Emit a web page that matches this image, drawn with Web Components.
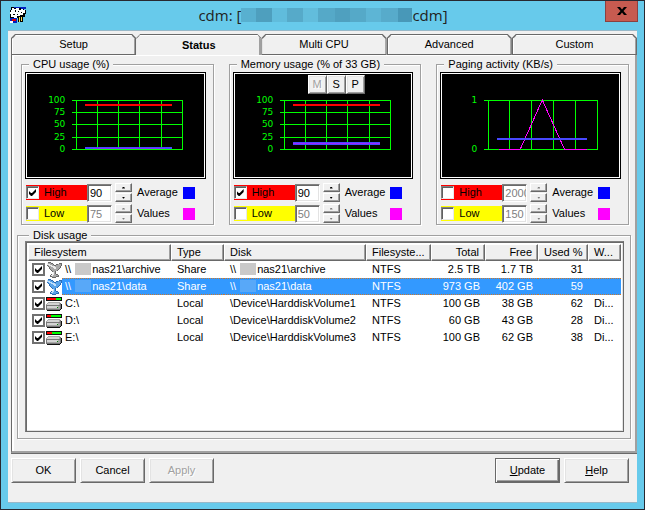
<!DOCTYPE html>
<html lang="en">
<head>
<meta charset="utf-8">
<title>cdm</title>
<style>
html, body { margin: 0; }
body { font: 11px/15px "Liberation Sans", Arial, sans-serif; color: #000; }
</style>
</head>
<body>
<cdm-window></cdm-window>
<script>
const define = (name, html, init) => {
  const template = document.createElement('template');
  template.innerHTML = html;
  customElements.define(name, class extends HTMLElement {
    connectedCallback() {
      if (this.shadowRoot) return;
      this.attachShadow({ mode: 'open' }).append(template.content.cloneNode(true));
      if (init) init.call(this, this.shadowRoot);
    }
  });
};

const checkCss = `
input[type=checkbox] { appearance: none; box-sizing: border-box; width: 13px; height: 13px; margin: 0; flex: none; background: #fff;
  border: 1px solid; border-color: #808080 #e8e8e8 #e8e8e8 #808080; box-shadow: inset 1px 1px #606060; }
input[type=checkbox]:checked::before { content: ""; display: block; width: 7px; height: 7px; margin: 2px; background: #000;
  clip-path: polygon(0 2px, 2px 4px, 3px 4px, 7px 0, 7px 3px, 3px 7px, 2px 7px, 0 5px); }`;

define('win-button', `
<style>
:host { display: block; width: 65px; height: 25px; }
button { box-sizing: border-box; width: 100%; height: 100%; padding: 0; font: inherit; color: #000; background: #f0f0f0;
  border: 1px solid; border-color: #fff #696969 #696969 #fff; box-shadow: inset 1px 1px #e3e3e3, inset -1px -1px #a0a0a0; }
button:disabled { color: #a0a0a0; text-shadow: 1px 1px #fff; }
:host([default]) button { border-color: #696969; box-shadow: inset 1px 1px #fff, inset -1px -1px #696969, inset -2px -2px #a0a0a0; }
</style>
<button type="button"><slot></slot></button>`, function (root) {
  root.querySelector('button').disabled = this.hasAttribute('disabled');
});

define('tab-bar', `
<style>
:host { display: block; }
div { display: grid; grid-template-columns: repeat(5, 1fr); height: 21px; }
button { border: 0; padding: 1px; font: inherit; color: #000; background: #696969; min-width: 0; display: flex;
  clip-path: polygon(0 4px, 4px 0, calc(100% - 4px) 0, 100% 4px, 100% 100%, 0 100%); }
span { flex: 1; height: 100%; display: flex; align-items: center; justify-content: center; background: #f0f0f0;
  clip-path: polygon(0 4px, 4px 0, calc(100% - 4px) 0, 100% 4px, 100% 100%, 0 100%); box-shadow: inset 1px 1px #fff, inset -1px 0 #a0a0a0; }
button[aria-selected=true] { font-weight: bold; padding: 1px 0 0 0; }
button[aria-selected=true] span { box-shadow: inset 1px 1px #fff, inset -2px 0 #a0a0a0; }
</style>
<div role="tablist">
<button role="tab" aria-selected="false"><span>Setup</span></button>
<button role="tab" aria-selected="true"><span>Status</span></button>
<button role="tab" aria-selected="false"><span>Multi CPU</span></button>
<button role="tab" aria-selected="false"><span>Advanced</span></button>
<button role="tab" aria-selected="false"><span>Custom</span></button>
</div>`);

define('group-box', `
<style>
:host { display: flex; flex-direction: column; min-width: 0; }
.box { flex: 1; display: flex; flex-direction: column; margin-top: 6px; padding: var(--pad, 0 7px 2px 3px);
  border: 1px solid #a0a0a0; box-shadow: 1px 1px #fff, inset 1px 1px #fff; }
.caption { width: fit-content; line-height: 13px; margin: -7px 0 var(--caption-gap, 0) 4px; padding: 0 4px; background: #f0f0f0; }
</style>
<div class="box" role="group" aria-labelledby="caption"><div class="caption" id="caption"></div><slot></slot></div>`, function (root) {
  root.querySelector('.caption').textContent = this.getAttribute('caption');
});

define('usage-chart', `
<style>
:host { display: block; position: relative; background: #000; border: 1px solid #000; box-shadow: inset 0 0 0 1px #fff; padding: 1px; }
svg { display: block; width: 100%; height: 103px; font: 9px "DejaVu Sans", sans-serif; fill: #0f0; }
slot { position: absolute; left: 74px; top: 2px; display: flex; }
</style>
<svg viewBox="0 0 176 103" shape-rendering="crispEdges"></svg><slot></slot>`, function (root) {
  const kind = this.getAttribute('kind');
  const paging = kind === 'paging';
  const xs = paging ? [46, 67, 89, 111, 133, 155] : [49, 70, 91, 112, 134, 155];
  const ys = paging ? [26, 75] : [26, 38, 50, 63, 75];
  const labels = paging ? ['1', '0'] : ['100', '75', '50', '25', '0'];
  const start = xs[0] - 4;
  const rect = (x, y, w, h, c) => `<rect x="${x}" y="${y}" width="${w}" height="${h}" fill="${c}"/>`;
  let s = xs.map(x => rect(x, 26, 1, 50, '#0f0')).join('');
  s += ys.map((y, i) => rect(start, y, 156 - start, 1, '#0f0') +
    `<text x="${start - 7}" y="${y + 3}" text-anchor="end">${labels[i]}</text>`).join('');
  if (paging) {
    s += '<path d="M78 75L100 26L122 75" fill="none" stroke="#f0f"/>';
    s += rect(57, 75, 21, 1, '#f0f') + rect(122, 75, 23, 1, '#f0f') + rect(55, 64, 90, 2, '#4848ff');
  } else {
    s += rect(58, 30, 87, 2, '#f00');
    s += kind === 'cpu' ? rect(58, 73, 87, 2, '#4848ff') + rect(66, 74, 72, 1, '#8030ff')
      : rect(58, 68, 87, 3, '#4848ff') + rect(58, 69, 87, 1, '#a020ff');
  }
  root.querySelector('svg').innerHTML = s;
});

define('limit-row', `
<style>
:host { display: grid; grid-template-columns: 61px 26px 19px 1fr 12px; height: 18px; align-items: center; padding: 0 11px 0 1px; }
label { display: flex; align-items: center; height: 15px; background: var(--level); }
.name { margin-left: 5px; }
${checkCss}
input[type=text] { box-sizing: border-box; width: 25px; height: 18px; margin: 0; padding: 0 0 0 2px; font: inherit; border: 1px solid;
  border-color: #808080 #fff #fff #808080; box-shadow: inset 1px 1px #696969, inset -1px -1px #e3e3e3; background: #fff; color: #000; }
input[type=text]:disabled { color: #808080; }
.spin { display: grid; gap: 1px; margin-left: 2px; }
.spin button { box-sizing: border-box; padding: 0; height: 9px; border: 1px solid; border-color: #fff #696969 #696969 #fff; background: #f0f0f0;
  box-shadow: inset -1px -1px #a0a0a0; display: grid; place-items: center; }
i { width: 3px; height: 2px; background: #000; clip-path: polygon(1px 0, 2px 0, 3px 2px, 0 2px); }
.down i { clip-path: polygon(0 0, 3px 0, 2px 2px, 1px 2px); }
button:disabled i { background: #808080; }
.key { padding-left: 5px; }
b { height: 12px; background: var(--mark); }
</style>
<label><input type="checkbox"><span class="name"></span></label>
<input type="text">
<span class="spin"><button type="button" aria-label="Increase"><i></i></button><button type="button" class="down" aria-label="Decrease"><i></i></button></span>
<span class="key"></span><b></b>`, function (root) {
  const high = this.getAttribute('level') === 'High';
  const off = this.hasAttribute('off');
  this.style.setProperty('--level', high ? '#f00' : '#ff0');
  this.style.setProperty('--mark', high ? '#00f' : '#f0f');
  root.querySelector('.name').textContent = high ? 'High' : 'Low';
  root.querySelector('.key').textContent = high ? 'Average' : 'Values';
  root.querySelector('[type=checkbox]').checked = !off;
  const text = root.querySelector('[type=text]');
  text.value = this.getAttribute('value');
  text.disabled = off;
  text.setAttribute('aria-label', high ? 'High limit' : 'Low limit');
  root.querySelectorAll('button').forEach(b => b.disabled = off);
});

define('usage-panel', `
<style>
:host { display: flex; flex-direction: column; min-width: 0; --caption-gap: 1px; }
group-box { flex: 1; }
.rows { display: grid; gap: 3px; padding-top: 4px; }
</style>`, function (root) {
  const get = name => this.getAttribute(name);
  root.querySelector('style').insertAdjacentHTML('afterend', `
<group-box caption="${get('caption')}">
<usage-chart kind="${get('kind')}"><slot></slot></usage-chart>
<div class="rows">
<limit-row level="High" value="${get('high')}" ${this.hasAttribute('off') ? 'off' : ''}></limit-row>
<limit-row level="Low" value="${get('low')}" off></limit-row>
</div>
</group-box>`);
});

const shareMap = [
  '..ddd...........',
  '.lmmmdd......ddd',
  '.lllmmmd..ddmmmd',
  '.dmlllmmddmmmmmd',
  '..dmmllllmmmmmd.',
  '...dmmmlllmmmmd.',
  '...dmmmmllmmmd..',
  '....dmmmmmmmd...',
  '.....dmmmmmd....',
  '......dmmd......',
  '.......lmd......',
  '.......lmd......',
  '.....dllmmdd....',
  '....dllmmmmmd...',
  '....ddmmmmddd...',
  '......dddd......'];
const driveMap = [
  '................',
  'kkkkkkkkkkkkkkkk',
  'kggggggggggggggk',
  'kggggggggggggggk',
  'kkkkkkkkkkkkkkkk',
  '................',
  '..mmmmmmmmmmmm..',
  '.mlllllllllllmd.',
  'mllllllllllllmdk',
  'dddddddddddddddk',
  'dlllllllllllmmdk',
  'dllllllllllGmmdk',
  'dmmmmmmmmmmmmmdk',
  'ddddddddddddddk.',
  '.kkkkkkkkkkkkk..',
  '................'];

define('disk-icon', `
<style>:host { display: block; width: 16px; height: 16px; flex: none; } svg { display: block; }</style>
<svg width="16" height="16" shape-rendering="crispEdges"></svg>`, function (root) {
  const used = +this.getAttribute('used');
  const share = this.hasAttribute('share');
  const colors = this.hasAttribute('selected')
    ? { d: '#2c6cb4', m: '#5aa4ea', l: '#c4e0fa' }
    : { d: share ? '#686868' : '#787878', m: '#a8a8a8', l: share ? '#ececec' : '#d4d4d4', k: '#101010', g: '#0f0', G: '#008000' };
  const map = share ? shareMap : driveMap;
  root.querySelector('svg').innerHTML = Object.entries(colors).map(([key, color]) =>
    `<path fill="${color}" d="${map.flatMap((row, y) => [...row].map((c, x) => c === key ? `M${x} ${y}h1v1h-1z` : '')).join('')}"/>`).join('')
    + (share ? '' : `<path fill="#f00" d="M1 2h${used}v2h-${used}z"/>`);
});

define('disk-table', `
<style>
:host { display: block; flex: 1; box-sizing: border-box; background: #fff; border: 1px solid; border-color: #808080 #696969 #696969 #808080;
  box-shadow: inset 1px 1px #696969, inset -1px -1px #e3e3e3; padding: 2px; overflow: hidden; }
table { width: 100%; table-layout: fixed; border-collapse: separate; border-spacing: 0; }
th { box-sizing: border-box; height: 17px; padding: 0 5px; font-weight: normal; text-align: left; background: #f0f0f0; white-space: nowrap;
  border: 1px solid; border-color: #fff #696969 #696969 #fff; box-shadow: inset -1px -1px #a0a0a0; line-height: 15px; }
td { height: 17px; padding: 0 0 0 6px; line-height: 17px; white-space: nowrap; overflow: hidden; }
th.n, td.n { text-align: right; padding-right: 5px; }
td:first-child { padding: 0 0 0 4px; }
.cell { display: flex; align-items: center; height: 17px; }
${checkCss}
.cell input[type=checkbox] { border: 2px solid #707070; box-shadow: none; }
.cell input[type=checkbox]:checked::before { margin: 1px; }
disk-icon { margin-left: 1px; }
.name { flex: 1; padding-left: 3px; box-sizing: border-box; height: 17px; line-height: 17px; }
.hid { display: inline-block; width: 16px; height: 12px; margin: 0 1px 0 4px; vertical-align: -2px; background: #c9c9c9; }
.sel { color: #fff; }
.sel td:not(:first-child), .sel .name { background: repeating-linear-gradient(90deg, #c87830 0 1px, #3399ff 1px 2px) top / 100% 1px no-repeat,
  repeating-linear-gradient(90deg, #c87830 0 1px, #3399ff 1px 2px) bottom / 100% 1px no-repeat, #3399ff; }
.sel .hid { background: #58a8f8; }
</style>
<table>
<colgroup><col style="width:143px"><col style="width:53px"><col><col style="width:65px"><col style="width:54px"><col style="width:53px"><col style="width:50px"><col style="width:33px"></colgroup>
<thead><tr><th>Filesystem</th><th>Type</th><th>Disk</th><th>Filesyste...</th><th class="n">Total</th><th class="n">Free</th><th class="n">Used %</th><th>W...</th></tr></thead>
<tbody></tbody></table>`, function (root) {
  const hid = '\\\\<span class="hid"></span>';
  const rows = [
    [hid + 'nas21\\archive', 'Share', hid + 'nas21\\archive', '2.5 TB', '1.7 TB', 31, ''],
    [hid + 'nas21\\data', 'Share', hid + 'nas21\\data', '973 GB', '402 GB', 59, ''],
    ['C:\\', 'Local', '\\Device\\HarddiskVolume1', '100 GB', '38 GB', 62, 'Di...'],
    ['D:\\', 'Local', '\\Device\\HarddiskVolume2', '60 GB', '43 GB', 28, 'Di...'],
    ['E:\\', 'Local', '\\Device\\HarddiskVolume3', '100 GB', '62 GB', 38, 'Di...']
  ];
  root.querySelector('tbody').innerHTML = rows.map((r, i) => `<tr${i === 1 ? ' class="sel"' : ''}>
    <td><label class="cell"><input type="checkbox" checked><disk-icon ${i < 2 ? 'share' : ''} ${i === 1 ? 'selected' : ''} used="${Math.round(r[5] * 14 / 100)}"></disk-icon><span class="name">${r[0]}</span></label></td>
    <td>${r[1]}</td><td>${r[2]}</td><td>NTFS</td><td class="n">${r[3]}</td><td class="n">${r[4]}</td><td class="n">${r[5]}</td><td>${r[6]}</td></tr>`).join('');
});

define('title-bar', `
<style>
:host { display: grid; grid-template-columns: 33px 1fr 33px; height: 30px; align-items: start; font: 15px/28px "Open Sans", sans-serif; color: #222; }
svg { margin: 6px 0 0 2px; display: block; }
h1 { margin: 0; font: inherit; display: flex; justify-content: center; align-items: center; white-space: nowrap; }
.mask { width: 171px; height: 14px; background: linear-gradient(90deg, #58b0d0 0 9%, #4e9fbe 9% 18%, #60bcdc 18% 27%, #56aac9 27% 36%, #62bddc 36% 45%, #55a9c8 45% 55%, #4fa0bf 55% 64%, #55a9c8 64% 73%, #5db5d5 73% 82%, #57abcb 82% 92%, #4898b8 92%); }
button { height: 21px; padding: 0; border: 1px solid #8b4040; border-top: 0; background: #c75b50; color: #000; display: grid; place-items: center; }
button svg { margin: 0; }
</style>
<svg width="16" height="16" shape-rendering="crispEdges"><path fill="#0020c0" d="M1 0h15v2h-15zM0 11h7v5h-7z"/>
<path fill="#000" d="M1 0h3v1h7v1h3v1h2v4h-1v3h-2v5h-5v-4h-3v2h-3v-2h-2v-8h1z"/>
<path fill="#fff" d="M2 1h2v1h2v-1h3v2h2v-1h2v1h2v3h-2v2h-3v1h-3v2h-3v-1h-3v-3h-1v-2h1z"/>
<path fill="#000" d="M5 3h1v2h-1zM8 4h1v1h-1zM3 7h2v1h-2zM11 5h1v1h-1zM7 7h1v1h-1z"/><path fill="#0020c0" d="M0 11h5v5h-5z"/><path fill="#e00000" d="M2 12h4v2h-4z"/><path fill="#ffe050" d="M9 10h1v5h-1zM11 10h1v4h-1z"/><path fill="#fff" d="M0 14h3v2h-3z"/></svg>
<h1><span>cdm: [</span><span class="mask"></span><span>cdm]</span></h1>
<button type="button" aria-label="Close"><svg width="10" height="8"><path d="M0 0h3l2 2.500l2-2.500h3l-3.500 4l3.500 4h-3l-2-2.500l-2 2.500h-3l3.500-4z"/></svg></button>`);

define('cdm-window', `
<style>
:host { box-sizing: border-box; min-height: 100vh; display: flex; flex-direction: column; padding: 0 6px 6px 7px; background: #67caeb; border: 1px solid #282830; }
main { flex: 1; display: flex; flex-direction: column; margin-right: 1px; background: #f0f0f0; box-shadow: 0 -1px #98b8c8; padding: 3px 0 0 3px; border-bottom: 1px solid #98b8c8; }
.panel { flex: 1; display: flex; flex-direction: column; border: solid; border-width: 0 2px 2px 1px; border-color: #a0a0a0 #a0a0a0 #a0a0a0 #696969; box-shadow: inset 2px 1px #fff, 0 1px #696969; padding: 3px 4px 12px 5px; }
.meters { display: grid; grid-template-columns: repeat(3, 1fr); gap: 15px; padding: 0 2px 0 4px; }
.disks { flex: 1; margin-top: 4px; --pad: 0 6px 6px 7px; --caption-gap: -1px; }
.small { width: 19px; height: 19px; }
footer { display: flex; gap: 4px; padding: 5px 8px 19px 0; }
.space { flex: 1; }
</style>
<title-bar></title-bar>
<main>
<tab-bar></tab-bar>
<section class="panel">
<div class="meters">
<usage-panel kind="cpu" high="90" low="75" caption="CPU usage (%)"></usage-panel>
<usage-panel kind="memory" high="90" low="50" caption="Memory usage (% of 33 GB)"><win-button class="small" disabled>M</win-button><win-button class="small">S</win-button><win-button class="small">P</win-button></usage-panel>
<usage-panel kind="paging" high="2000" low="150" off caption="Paging activity (KB/s)"></usage-panel>
</div>
<group-box class="disks" caption="Disk usage"><disk-table></disk-table></group-box>
</section>
<footer><win-button>OK</win-button><win-button>Cancel</win-button><win-button disabled>Apply</win-button><span class="space"></span><win-button default><u>U</u>pdate</win-button><win-button><u>H</u>elp</win-button></footer>
</main>`);
</script>
</body>
</html>
